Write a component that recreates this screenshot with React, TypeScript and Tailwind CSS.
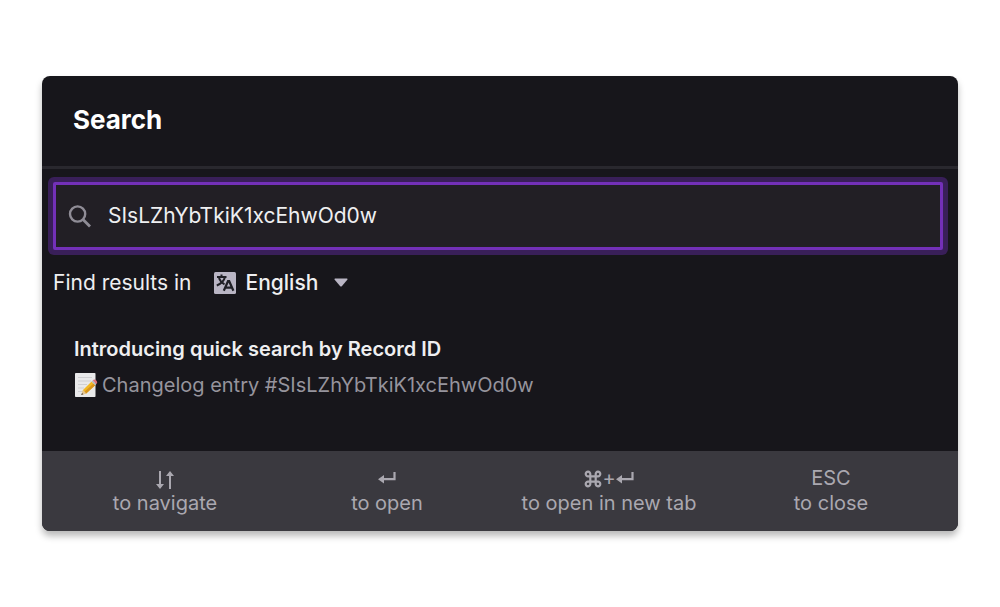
import { useState } from "react";
import type { ReactNode } from "react";

function SearchIcon() {
  return (
    <svg aria-hidden="true" viewBox="0 0 24 24" className="size-6 shrink-0" fill="none" stroke="#8f8c96" strokeWidth="2.4">
      <circle cx="9.6" cy="10" r="7.6" />
      <path d="M15 15.4 L22 22.4" strokeWidth="2.8" />
    </svg>
  );
}

function TranslateIcon() {
  return (
    <svg aria-hidden="true" viewBox="0 0 22 22" className="size-[22px] shrink-0" fill="none">
      <rect width="22" height="22" rx="1.5" fill="#b9b5c4" />
      <g stroke="#202026" strokeWidth="2">
        <path d="M3 5 H12.5 M7.5 2.5 V5 M11 5 C10 9 7 11.8 2.8 13.5 M5 6 C6 9 8 11 10.5 12.3" />
        <path d="M9.8 18.8 L14 9.2 H15.2 L19.4 18.8 M11.5 15.6 H17.8" strokeWidth="2.2" />
      </g>
    </svg>
  );
}

function MemoIcon() {
  return (
    <svg aria-hidden="true" viewBox="0 0 24 26" className="h-[26px] w-6 shrink-0">
      <rect x="1" y="1" width="20.5" height="24" rx="0.8" fill="#e9e9ea" />
      <path d="M4 5.5 H18 M4 9 H17 M4 12.5 H13 M4 16 H10 M4 19.5 H8" stroke="#cfcfd2" strokeWidth="1" />
      <path d="M17.6 9.4 L21.2 13.2 L12.2 21.4 L7.6 22.8 L9 18 Z" fill="#f2b824" />
      <path d="M19.6 11.4 L21.2 13.2 L12.2 21.4 L10.6 19.6 Z" fill="#d9941c" />
      <path d="M9 18 L12.2 21.4 L7.4 23 Z" fill="#e3c596" />
      <path d="M8 20.9 L9.3 22.3 L7.2 23.1 Z" fill="#3c3a3a" />
      <path d="M17.6 9.4 L18.8 8.3 L22.4 12.1 L21.2 13.2 Z" fill="#b9bcc2" />
      <path d="M18.8 8.3 C20 7.2 21 7.3 22.2 8.5 C23.5 9.9 23.5 11 22.4 12.1 Z" fill="#e0707c" />
    </svg>
  );
}

function ArrowsIcon() {
  return (
    <svg aria-hidden="true" viewBox="0 0 18 20" className="h-5 w-[18px]" fill="#aaa8b0">
      <path d="M3 2 H5 V15 H8 L4 20 L0 15 H3 Z" />
      <path d="M13 20 H15 V7 H18 L14 2 L10 7 H13 Z" />
    </svg>
  );
}

function ReturnIcon() {
  return (
    <svg aria-hidden="true" viewBox="0 0 18 14" className="h-3.5 w-[18px]" fill="#aaa8b0">
      <path d="M15.4 0 H17.6 V8.2 H6 V11.4 L0 7.2 L6 3 V6 H15.4 Z" />
    </svg>
  );
}

function CommandIcon() {
  return (
    <svg aria-hidden="true" viewBox="0 0 18 18" className="size-[18px]" fill="none" stroke="#aaa8b0" strokeWidth="2.2">
      <path d="M6.3 6.3 H11.7 V11.7 H6.3 Z M6.3 6.3 H4.2 A2.3 2.3 0 1 1 6.3 4.2 Z M11.7 6.3 V4.2 A2.3 2.3 0 1 1 13.8 6.3 Z M11.7 11.7 H13.8 A2.3 2.3 0 1 1 11.7 13.8 Z M6.3 11.7 V13.8 A2.3 2.3 0 1 1 4.2 11.7 Z" />
    </svg>
  );
}

function Shortcut({ keys, label }: { keys: ReactNode; label: string }) {
  return (
    <li className="flex flex-col items-center">
      <span className="flex h-[25px] items-center justify-center">{keys}</span>
      <span className="whitespace-nowrap">{label}</span>
    </li>
  );
}

export default function App() {
  const [query, setQuery] = useState("SIsLZhYbTkiK1xcEhwOd0w");
  return (
    <main className="min-h-screen bg-white px-[42px] py-19 font-['Inter','Liberation_Sans',sans-serif] text-xl">
      <section
        aria-labelledby="search-title"
        className="overflow-hidden rounded-lg bg-[#17161b] text-[#efeff1] shadow-[0_5px_7px_rgba(0,0,0,0.28)]"
      >
        <header className="border-b-3 border-[#29282e] px-[31px] pt-6 pb-[26px]">
          <h1 id="search-title" className="text-[26px] leading-10 font-bold text-white">
            <label htmlFor="query">Search</label>
          </h1>
        </header>

        <div className="px-[11px] pt-[13px]">
          <div className="mr-1 flex h-17 items-center gap-4 rounded-xs border-3 border-[#7330b8] bg-[#221f25] px-3 ring-5 ring-[#391f59]">
            <SearchIcon />
            <input
              id="query"
              type="text"
              value={query}
              onChange={(e) => setQuery(e.target.value)}
              className="min-w-0 flex-1 bg-transparent text-[21px] leading-8 outline-none"
            />
          </div>

          <div className="mt-[17px] flex h-8 items-center text-[21px]">
            <label htmlFor="language">Find results in</label>
            <span className="ml-[22px] flex items-center">
              <TranslateIcon />
              <select
                id="language"
                defaultValue="en"
                className="ml-2.5 w-22 appearance-none bg-transparent font-medium outline-none"
              >
                <option value="en">English</option>
              </select>
              <svg aria-hidden="true" viewBox="0 0 14 9" className="h-[9px] w-3.5" fill="#b9b5c4">
                <path d="M1 0.5 H13 Q14 0.8 13.3 1.8 L8 8 Q7 9 6 8 L0.7 1.8 Q0 0.8 1 0.5 Z" />
              </svg>
            </span>
          </div>
        </div>

        <a href="#result" className="mt-8 block px-8 pb-12">
          <h2 className="leading-9 font-semibold">Introducing quick search by Record ID</h2>
          <p className="flex h-9 items-center gap-1 text-[#96949d]">
            <MemoIcon />
            Changelog entry #SIsLZhYbTkiK1xcEhwOd0w
          </p>
        </a>

        <ul className="grid grid-cols-4 bg-[#3a393f] py-[15px] pr-4 pl-3 leading-[25px] text-[#aaa8b0]">
          <Shortcut keys={<ArrowsIcon />} label="to navigate" />
          <Shortcut keys={<ReturnIcon />} label="to open" />
          <Shortcut
            keys={
              <>
                <CommandIcon />
                <span>+</span>
                <ReturnIcon />
              </>
            }
            label="to open in new tab"
          />
          <Shortcut keys="ESC" label="to close" />
        </ul>
      </section>
    </main>
  );
}
